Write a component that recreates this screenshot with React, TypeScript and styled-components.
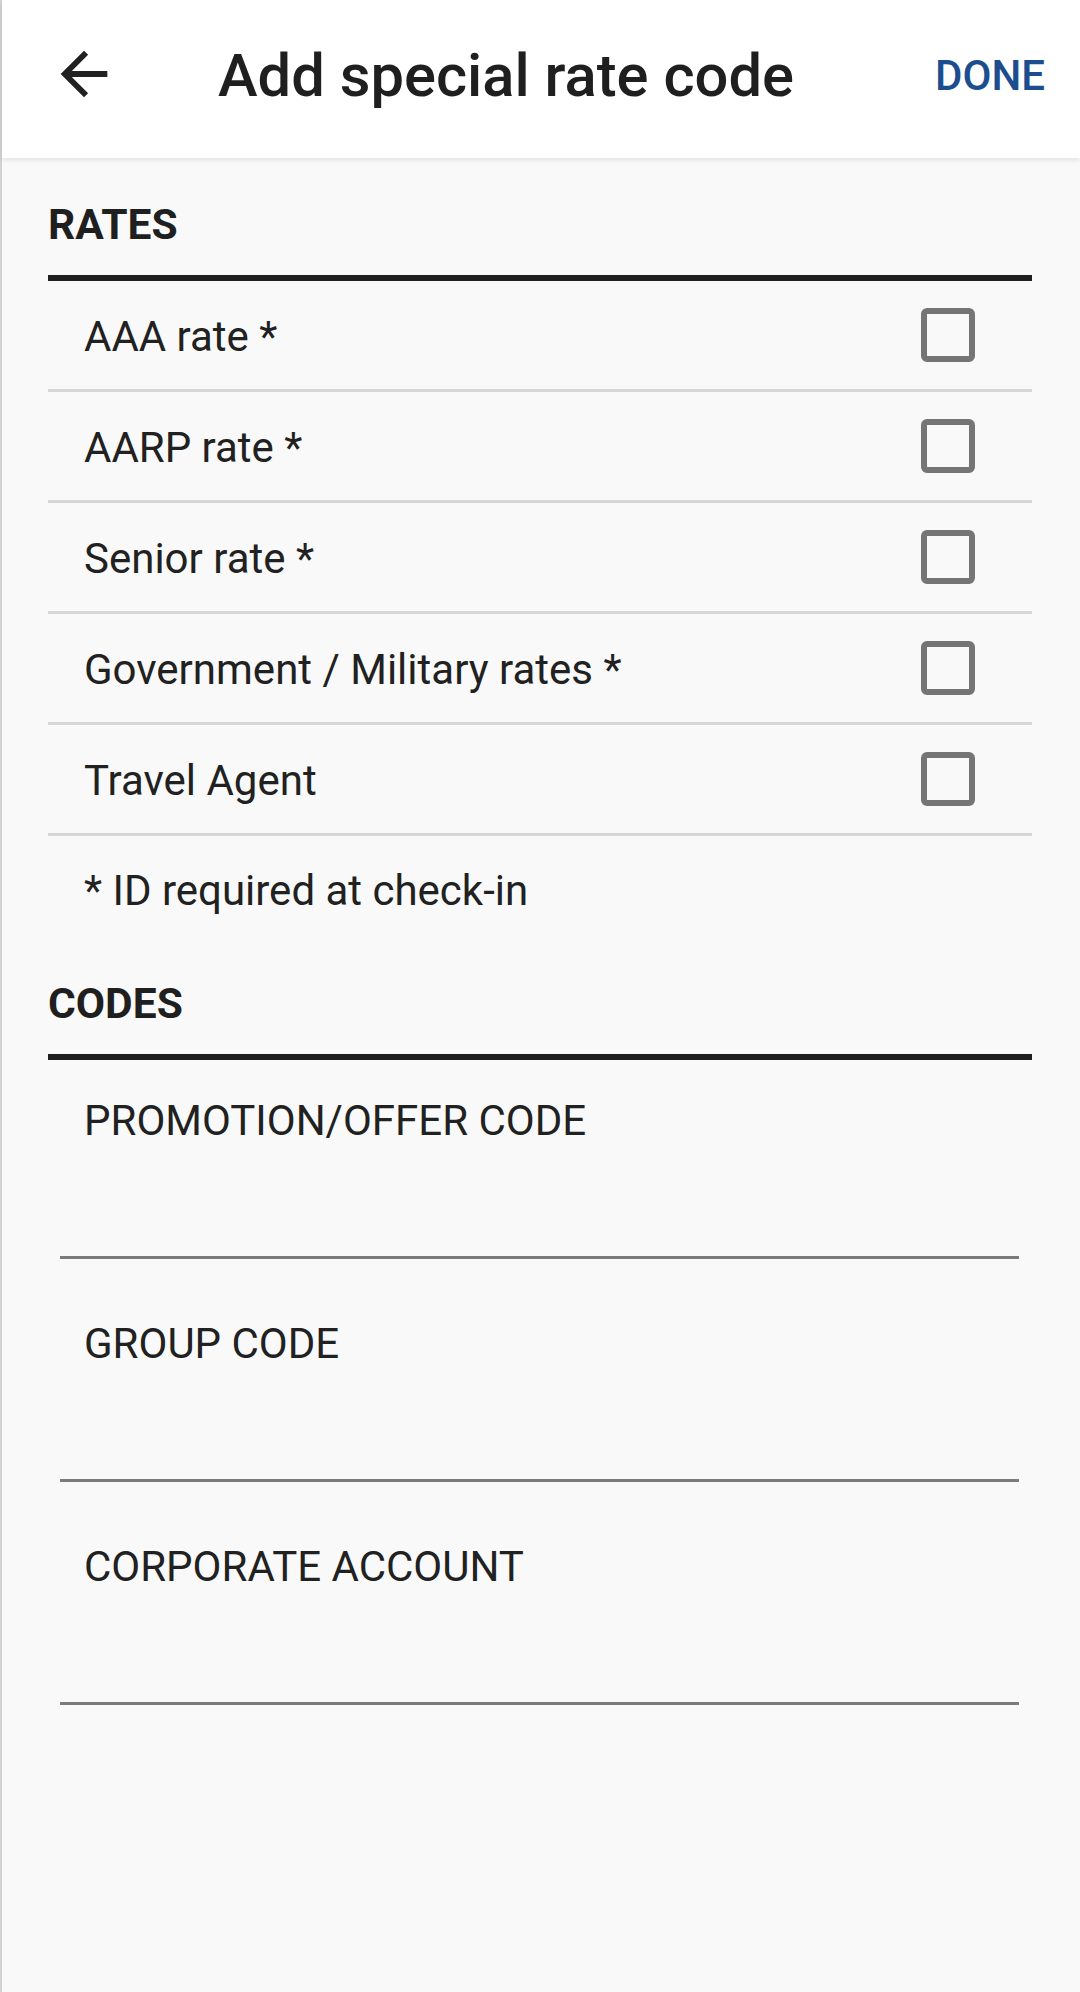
import React from "react";
import styled, { createGlobalStyle } from "styled-components";

const GlobalStyle = createGlobalStyle`
  html, body {
    margin: 0;
    padding: 0;
    background: #f9f9f9;
  }
  body {
    font-family: Roboto, "Noto Sans", "Liberation Sans", sans-serif;
    color: #212121;
  }
  * { box-sizing: border-box; }
`;

const Page = styled.div`
  min-height: 1992px;
  background: #f9f9f9;
  border-left: 2px solid #d2d2d2;
`;

const Header = styled.header`
  height: 158px;
  background: #ffffff;
  display: flex;
  align-items: center;
  padding-bottom: 7px;
  box-shadow: 0 2px 5px rgba(0, 0, 0, 0.1);
  position: relative;
  z-index: 1;
`;

const BackButton = styled.button`
  width: 70px;
  height: 70px;
  margin-left: 47px;
  margin-bottom: 4px;
  padding: 0;
  border: none;
  background: transparent;
  display: flex;
  align-items: center;
  justify-content: center;
  color: #212121;
`;

const Title = styled.h1`
  margin: 0 0 0 99px;
  font-size: 59.7px;
  line-height: 72px;
  font-weight: 500;
  color: #1f1f1f;
`;

const DoneButton = styled.button`
  margin-left: auto;
  margin-right: 35px;
  padding: 0;
  border: none;
  background: transparent;
  font-family: inherit;
  font-size: 42px;
  line-height: 48px;
  font-weight: 500;
  color: #1c4e8f;
`;

const Content = styled.main`
  padding: 0 48px 0 46px;
`;

const SectionHeader = styled.h2`
  margin: 0;
  padding: 43px 0 26px 0;
  font-size: 42.5px;
  line-height: 48px;
  font-weight: 700;
  color: #1f1f1f;
  border-bottom: 6px solid #1f1f1f;
`;

const RateList = styled.ul`
  list-style: none;
  margin: 0;
  padding: 0;
`;

const RateRow = styled.li`
  height: 111px;
  display: flex;
  align-items: center;
  justify-content: space-between;
  padding: 4px 57px 0 36px;
  border-bottom: 3px solid #d6d6d6;
`;

const RowLabel = styled.span`
  font-size: 42px;
  line-height: 48px;
  color: #212121;
`;

const CheckBox = styled.span`
  width: 54px;
  height: 54px;
  margin-top: -4px;
  border: 6px solid #757575;
  border-radius: 6px;
  background: transparent;
`;

const Footnote = styled.p`
  margin: 0;
  padding: 31px 0 22px 36px;
  font-size: 42px;
  line-height: 48px;
  color: #212121;
`;

const FieldList = styled.div`
  display: flex;
  flex-direction: column;
  padding: 0 13px 0 12px;
`;

const Field = styled.label`
  display: block;
  padding-top: 61px;
  border-bottom: 3px solid #7b7b7b;

  &:first-child {
    padding-top: 37px;
  }
`;

const FieldLabel = styled.span`
  display: block;
  padding-left: 24px;
  font-size: 42px;
  line-height: 48px;
  color: #212121;
`;

const FieldInput = styled.input`
  display: block;
  width: 100%;
  height: 111px;
  border: none;
  outline: none;
  background: transparent;
  padding: 0 24px;
  font-family: inherit;
  font-size: 42px;
  color: #212121;
`;

const ArrowIcon = () => (
  <svg width="70" height="70" viewBox="0 0 24 24" fill="currentColor">
    <path d="M20 11H7.83l5.59-5.59L12 4l-8 8 8 8 1.41-1.41L7.83 13H20v-2z" />
  </svg>
);

const rates = [
  "AAA rate *",
  "AARP rate *",
  "Senior rate *",
  "Government / Military rates *",
  "Travel Agent",
];

const codes = ["PROMOTION/OFFER CODE", "GROUP CODE", "CORPORATE ACCOUNT"];

export default function App() {
  return (
    <>
      <GlobalStyle />
      <Page>
        <Header>
          <BackButton aria-label="Back">
            <ArrowIcon />
          </BackButton>
          <Title>Add special rate code</Title>
          <DoneButton>DONE</DoneButton>
        </Header>
        <Content>
          <SectionHeader>RATES</SectionHeader>
          <RateList>
            {rates.map((r) => (
              <RateRow key={r}>
                <RowLabel>{r}</RowLabel>
                <CheckBox />
              </RateRow>
            ))}
          </RateList>
          <Footnote>* ID required at check-in</Footnote>
          <SectionHeader>CODES</SectionHeader>
          <FieldList>
            {codes.map((c) => (
              <Field key={c}>
                <FieldLabel>{c}</FieldLabel>
                <FieldInput type="text" />
              </Field>
            ))}
          </FieldList>
        </Content>
      </Page>
    </>
  );
}
